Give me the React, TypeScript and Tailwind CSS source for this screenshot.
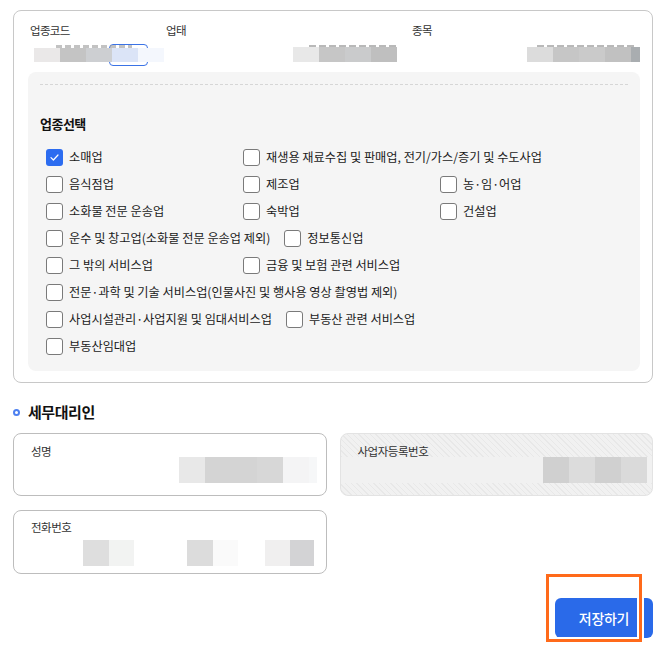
import type { ReactNode } from 'react';

type Block = { w: number; c: string };

function Mosaic({ blocks, h = 26 }: { blocks: Block[]; h?: number }) {
  return (
    <div className="flex" style={{ height: h }}>
      {blocks.map((b, i) => (
        <div key={i} style={{ width: b.w, backgroundColor: b.c }} />
      ))}
    </div>
  );
}

function Check({ label, checked = false }: { label: string; checked?: boolean }) {
  return (
    <label className="flex min-w-[183px] items-center gap-[6px]">
      {checked ? (
        <span className="flex h-[17px] w-[17px] items-center justify-center rounded-[3px] bg-[#2c6cf0]">
          <svg width="9" height="7" viewBox="0 0 9 7" fill="none">
            <path d="M1 3.6L3.4 6L8 1" stroke="white" strokeWidth="1.2" strokeLinecap="round" strokeLinejoin="round" />
          </svg>
        </span>
      ) : (
        <span className="h-[17px] w-[17px] rounded-[3px] border border-[#7a7a7a] bg-white" />
      )}
      <span className="whitespace-nowrap text-[12.2px] leading-[17px] text-[#1a1a1a]">{label}</span>
    </label>
  );
}

function Row({ children }: { children: ReactNode }) {
  return <div className="flex h-[17px] gap-x-[14px]">{children}</div>;
}

export default function App() {
  return (
    <div
      className="h-[648px] w-[665px] bg-white pl-[13px] pr-[12px] pt-[10px]"
      style={{ fontFamily: '"Noto Sans CJK KR", "Noto Sans", sans-serif' }}
    >
      {/* 업종 카드 */}
      <div className="rounded-[8px] border border-[#c8c8c8] pb-[11px] pl-[14px] pr-[12px] pt-[11px]">
        <div className="flex pl-[2px] text-[11.5px] leading-[16px] tracking-[-0.06em] text-[#333]">
          <span className="w-[136px]">업종코드</span>
          <span className="w-[246px]">업태</span>
          <span>종목</span>
        </div>
        <div className="mt-[3px] flex h-[22px] pl-[2px]">
          <div className="relative w-[136px]">
            <button className="ml-[79px] h-[22px] w-[39px] rounded-[4px] border border-[#3b73e6] bg-white text-[11px] text-[#3b73e6]">
              검색
            </button>
            <div className="absolute left-[4px] top-[4px]">
              <div className="ml-[22px] h-[3px] w-[76px] bg-[repeating-linear-gradient(90deg,#9a9a9a_0px,#9a9a9a_6px,transparent_6px,transparent_9px)] opacity-60" />
              <Mosaic
                h={14}
                blocks={[
                  { w: 26, c: '#eae8e8' },
                  { w: 26, c: '#c4c4c4' },
                  { w: 26, c: '#cdcfd2' },
                  { w: 26, c: '#dbe4f7' },
                  { w: 26, c: '#f4f7fd' },
                ]}
              />
            </div>
          </div>
          <div className="w-[246px] pl-[128px] pt-[4px]">
            <div className="ml-[16px] h-[2px] w-[88px] bg-[repeating-linear-gradient(90deg,#8a8a8a_0px,#8a8a8a_7px,transparent_7px,transparent_10px)] opacity-60" />
            <Mosaic
              h={15}
              blocks={[
                { w: 26, c: '#e8e8e8' },
                { w: 26, c: '#c6c6c6' },
                { w: 26, c: '#cacbcc' },
                { w: 26, c: '#bfbfbf' },
              ]}
            />
          </div>
          <div className="pl-[116px] pt-[4px]">
            <div className="ml-[10px] h-[2px] w-[100px] bg-[repeating-linear-gradient(90deg,#8a8a8a_0px,#8a8a8a_7px,transparent_7px,transparent_10px)] opacity-60" />
            <Mosaic
              h={15}
              blocks={[
                { w: 26, c: '#dcdcdc' },
                { w: 26, c: '#c6c6c6' },
                { w: 26, c: '#cacaca' },
                { w: 26, c: '#c1c1c1' },
                { w: 9, c: '#a9adb0' },
              ]}
            />
          </div>
        </div>

        <div className="mt-[9px] rounded-[8px] bg-[#f5f5f5] px-[12px] pb-[16px] pt-[12px]">
          <div className="border-t border-dashed border-[#d6d6d6]" />
          <h3 className="mt-[29px] text-[13px] font-bold leading-[20px] tracking-[-0.04em] text-[#111]">업종선택</h3>
          <div className="mt-[15px] flex flex-col gap-[10px] pl-[6px]">
            <Row>
              <Check label="소매업" checked />
              <Check label="재생용 재료수집 및 판매업, 전기/가스/증기 및 수도사업" />
            </Row>
            <Row>
              <Check label="음식점업" />
              <Check label="제조업" />
              <Check label="농·임·어업" />
            </Row>
            <Row>
              <Check label="소화물 전문 운송업" />
              <Check label="숙박업" />
              <Check label="건설업" />
            </Row>
            <Row>
              <Check label="운수 및 창고업(소화물 전문 운송업 제외)" />
              <Check label="정보통신업" />
            </Row>
            <Row>
              <Check label="그 밖의 서비스업" />
              <Check label="금융 및 보험 관련 서비스업" />
            </Row>
            <Row>
              <Check label="전문·과학 및 기술 서비스업(인물사진 및 행사용 영상 촬영법 제외)" />
            </Row>
            <Row>
              <Check label="사업시설관리·사업지원 및 임대서비스업" />
              <Check label="부동산 관련 서비스업" />
            </Row>
            <Row>
              <Check label="부동산임대업" />
            </Row>
          </div>
        </div>
      </div>

      {/* 세무대리인 */}
      <div className="mt-[19px] flex items-center gap-[8px]">
        <span className="h-[7px] w-[7px] rounded-full border-2 border-[#4d80f0]" />
        <h2 className="text-[15px] font-bold leading-[20px] tracking-[-0.03em] text-[#111]">세무대리인</h2>
      </div>

      <div className="mt-[11px] grid grid-cols-2 gap-x-[13px] gap-y-[14px]">
        <div className="h-[63px] rounded-[8px] border border-[#bdbdbd] bg-white pl-[17px] pt-[9px]">
          <div className="text-[11.5px] leading-[16px] tracking-[-0.04em] text-[#333]">성명</div>
          <div className="-mt-[2px] pl-[148px]">
            <Mosaic
              blocks={[
                { w: 26, c: '#e8e8e8' },
                { w: 26, c: '#d4d4d4' },
                { w: 26, c: '#d4d4d4' },
                { w: 26, c: '#d7d7d7' },
                { w: 26, c: '#f4f4f5' },
                { w: 8, c: '#f6f7f8' },
              ]}
            />
          </div>
        </div>
        <div className="h-[63px] rounded-[8px] border border-[#e3e3e3] bg-[repeating-linear-gradient(45deg,#f1f1f1_0px,#f1f1f1_3px,#e8e8e8_3px,#e8e8e8_4px)] pl-[17px] pt-[9px]">
          <div className="text-[11.5px] leading-[16px] tracking-[-0.04em] text-[#333]">사업자등록번호</div>
          <div className="-mt-[2px] ml-[-17px] flex h-[26px] bg-[#f1f1f1] pl-[202px]">
            <Mosaic
              blocks={[
                { w: 26, c: '#d0d0d0' },
                { w: 26, c: '#dcdcdc' },
                { w: 26, c: '#d0d0d0' },
                { w: 26, c: '#dadada' },
              ]}
            />
          </div>
        </div>
        <div className="h-[64px] rounded-[8px] border border-[#bdbdbd] bg-white pl-[17px] pt-[8px]">
          <div className="text-[11.5px] leading-[16px] tracking-[-0.04em] text-[#333]">전화번호</div>
          <div className="mt-[5px] flex gap-0 pl-[52px]">
            <Mosaic
              blocks={[
                { w: 26, c: '#dedede' },
                { w: 25, c: '#f2f3f2' },
                { w: 53, c: '#ffffff' },
                { w: 26, c: '#dcdcdc' },
                { w: 25, c: '#fafafa' },
                { w: 27, c: '#ffffff' },
                { w: 25, c: '#f0efef' },
                { w: 24, c: '#d3d3d5' },
              ]}
            />
          </div>
        </div>
      </div>

      <div className="mt-[24px] flex justify-end">
        <div className="relative">
          <button className="h-[40px] w-[98px] rounded-[6px] bg-[#2a6ae9] text-[14px] font-medium tracking-[-0.02em] text-white">
            저장하기
          </button>
          <div className="pointer-events-none absolute left-[-9px] top-[-24px] h-[68px] w-[96px] border-[3px] border-[#ff6a1a] shadow-[0_0_0_2px_white,inset_0_0_0_2px_white]" />
        </div>
      </div>
    </div>
  );
}
